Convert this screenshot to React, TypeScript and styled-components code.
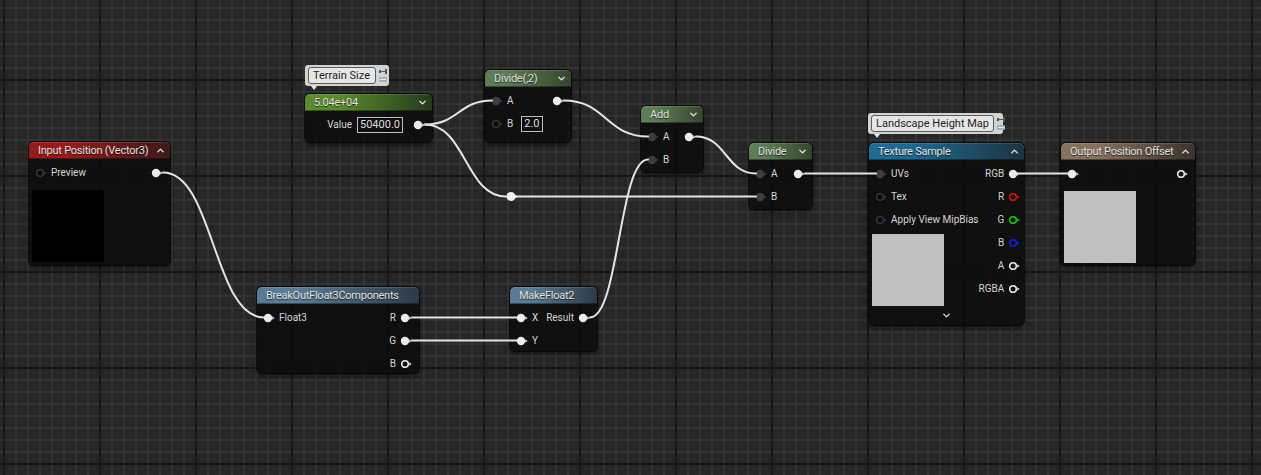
import React from "react";
import styled, { createGlobalStyle } from "styled-components";
import { ChevronDown, ChevronUp } from "lucide-react";

const GlobalStyle = createGlobalStyle`
  html, body { margin: 0; padding: 0; background: #262626; }
  body { font-family: Roboto, "Noto Sans", sans-serif; }
`;

type PinKind = "white" | "hollow" | "dim" | "ring";

interface Row {
  label?: string;
  pin: PinKind;
  color?: string;
  value?: string;
}

interface NodeDef {
  id: string;
  title: string;
  x: number;
  y: number;
  w: number;
  h: number;
  from: string;
  to: string;
  collapse?: "up" | "down";
  inputs: Row[];
  outputs: Row[];
  preview?: string;
  previewGap?: number;
  footer?: boolean;
}

const HEADER = 17;
const ROW = 23;

const NODES: NodeDef[] = [
  {
    id: "inputPos", title: "Input Position (Vector3)", x: 29, y: 142, w: 141, h: 123,
    from: "#981b1b", to: "#3b1a1a", collapse: "up",
    inputs: [{ pin: "ring", label: "Preview" }], outputs: [{ pin: "white" }],
    preview: "#000", previewGap: 6,
  },
  {
    id: "const", title: "5.04e+04", x: 305, y: 94, w: 127, h: 48,
    from: "#5a8c2e", to: "#263a1c", collapse: "down",
    inputs: [], outputs: [{ pin: "white", label: "Value", value: "50400.0" }],
  },
  {
    id: "divide2", title: "Divide(,2)", x: 485, y: 70, w: 86, h: 72,
    from: "#5e7c55", to: "#34452f", collapse: "down",
    inputs: [{ pin: "dim", label: "A" }, { pin: "ring", label: "B", value: "2.0" }],
    outputs: [{ pin: "white" }],
  },
  {
    id: "add", title: "Add", x: 641, y: 106, w: 62, h: 66,
    from: "#5e7c55", to: "#34452f", collapse: "down",
    inputs: [{ pin: "dim", label: "A" }, { pin: "dim", label: "B" }],
    outputs: [{ pin: "white" }],
  },
  {
    id: "divide", title: "Divide", x: 749, y: 143, w: 63, h: 66,
    from: "#5e7c55", to: "#34452f", collapse: "down",
    inputs: [{ pin: "dim", label: "A" }, { pin: "dim", label: "B" }],
    outputs: [{ pin: "white" }],
  },
  {
    id: "texture", title: "Texture Sample", x: 869, y: 143, w: 155, h: 182,
    from: "#1e6a92", to: "#1d3442", collapse: "up",
    inputs: [
      { pin: "dim", label: "UVs" },
      { pin: "ring", label: "Tex" },
      { pin: "ring", label: "Apply View MipBias" },
    ],
    outputs: [
      { pin: "white", label: "RGB" },
      { pin: "hollow", label: "R", color: "#e01010" },
      { pin: "hollow", label: "G", color: "#10d010" },
      { pin: "hollow", label: "B", color: "#1020e8" },
      { pin: "hollow", label: "A" },
      { pin: "hollow", label: "RGBA" },
    ],
    preview: "#c0c0c0", previewGap: 3, footer: true,
  },
  {
    id: "output", title: "Output Position Offset", x: 1061, y: 143, w: 134, h: 122,
    from: "#87725d", to: "#3a332d", collapse: "up",
    inputs: [{ pin: "white" }], outputs: [{ pin: "hollow" }],
    preview: "#c0c0c0", previewGap: 6,
  },
  {
    id: "breakout", title: "BreakOutFloat3Components", x: 257, y: 287, w: 162, h: 86,
    from: "#5a7b93", to: "#2c3a46",
    inputs: [{ pin: "white", label: "Float3" }],
    outputs: [
      { pin: "white", label: "R" },
      { pin: "white", label: "G" },
      { pin: "hollow", label: "B" },
    ],
  },
  {
    id: "make", title: "MakeFloat2", x: 510, y: 287, w: 87, h: 64,
    from: "#5a7b93", to: "#2c3a46",
    inputs: [{ pin: "white", label: "X" }, { pin: "white", label: "Y" }],
    outputs: [{ pin: "white", label: "Result" }],
  },
];

const byId = (id: string) => NODES.find((n) => n.id === id)!;
const rowY = (n: NodeDef, i: number) => n.y + HEADER + 2 + ROW * i + ROW / 2;
const outPt = (id: string, i: number): [number, number] => {
  const n = byId(id);
  return [n.x + n.w - 14 + 7, rowY(n, i)];
};
const inPt = (id: string, i: number): [number, number] => {
  const n = byId(id);
  return [n.x + 11 - 4, rowY(n, i)];
};

const curve = ([x1, y1]: [number, number], [x2, y2]: [number, number]) => {
  const d = Math.max(Math.abs(x2 - x1) * 0.5, 25);
  return `M${x1} ${y1} C${x1 + d} ${y1} ${x2 - d} ${y2} ${x2} ${y2}`;
};

const KNOT: [number, number] = [511, 196.5];

const WIRES: [string, number, string, number][] = [
  ["inputPos", 0, "breakout", 0],
  ["const", 0, "divide2", 0],
  ["divide2", 0, "add", 0],
  ["add", 0, "divide", 0],
  ["make", 0, "add", 1],
  ["divide", 0, "texture", 0],
  ["texture", 0, "output", 0],
  ["breakout", 0, "make", 0],
  ["breakout", 1, "make", 1],
];

const Canvas = styled.div`
  position: relative;
  width: 1261px;
  height: 475px;
  overflow: hidden;
  background-color: #262626;
  background-image:
    linear-gradient(to right, #171717 2px, transparent 2px),
    linear-gradient(to bottom, #171717 2px, transparent 2px),
    linear-gradient(to right, #333333 2px, transparent 2px),
    linear-gradient(to bottom, #333333 2px, transparent 2px);
  background-size: 96px 96px, 96px 96px, 12px 12px, 12px 12px;
  background-position: 3px 0, 0 79px, 3px 0, 0 7px;
`;

const NodeBox = styled.div<{ $x: number; $y: number; $w: number; $h: number }>`
  position: absolute;
  left: ${(p) => p.$x}px;
  top: ${(p) => p.$y}px;
  width: ${(p) => p.$w}px;
  height: ${(p) => p.$h}px;
  display: flex;
  flex-direction: column;
  background: rgba(12, 13, 12, 0.88);
  border-radius: 5px;
  box-shadow: 0 0 0 1px rgba(0, 0, 0, 0.7), 0 3px 5px rgba(0, 0, 0, 0.5);
  color: #d8d8d8;
`;

const Header = styled.div<{ $from: string; $to: string }>`
  height: ${HEADER}px;
  flex: none;
  display: flex;
  align-items: center;
  justify-content: space-between;
  padding: 0 4px 0 9px;
  border-radius: 5px 5px 0 0;
  background: linear-gradient(90deg, ${(p) => p.$from} 0%, ${(p) => p.$from} 25%, ${(p) => p.$to} 100%);
  box-shadow: inset 0 1px 0 rgba(255, 255, 255, 0.12), inset 0 -1px 0 rgba(0, 0, 0, 0.4);
  font-size: 11px;
  letter-spacing: -0.25px;
  color: #e2e2e2;
  text-shadow: 0 1px 1px rgba(0, 0, 0, 0.7);
  white-space: nowrap;
`;

const Body = styled.div`
  display: flex;
  justify-content: space-between;
  padding-top: 2px;
`;

const Column = styled.div<{ $side: "in" | "out" }>`
  display: flex;
  flex-direction: column;
  align-items: ${(p) => (p.$side === "in" ? "flex-start" : "flex-end")};
`;

const PinRow = styled.div<{ $side: "in" | "out" }>`
  height: ${ROW}px;
  display: flex;
  align-items: center;
  gap: 4px;
  padding: ${(p) => (p.$side === "in" ? "0 0 0 6px" : "0 7px 0 0")};
  font-size: 10px;
  color: #d4d4d4;
  white-space: nowrap;
`;

const ValueBox = styled.span<{ $side: "in" | "out" }>`
  display: inline-block;
  height: 14px;
  line-height: 14px;
  padding: 0 2px;
  margin: ${(p) => (p.$side === "out" ? "0 6px 0 1px" : "0 0 0 4px")};
  border: 1px solid #bdbdbd;
  font-size: 11px;
  color: #dedede;
`;

const Preview = styled.div<{ $color: string; $gap: number }>`
  width: 72px;
  height: 72px;
  margin: ${(p) => p.$gap}px 0 0 3px;
  background: ${(p) => p.$color};
`;

const Footer = styled.div`
  flex: 1;
  display: flex;
  align-items: center;
  justify-content: center;
  color: #e0e0e0;
`;

const Bubble = styled.div<{ $x: number; $y: number; $w: number }>`
  position: absolute;
  z-index: 3;
  left: ${(p) => p.$x}px;
  top: ${(p) => p.$y}px;
  width: ${(p) => p.$w}px;
  height: 21px;
  box-sizing: border-box;
  display: flex;
  align-items: center;
  gap: 3px;
  padding: 0 2px 0 3px;
  background: #d2d2d2;
  border-radius: 3px;
  &::after {
    content: "";
    position: absolute;
    left: 6px;
    bottom: -4px;
    border-left: 3px solid transparent;
    border-right: 3px solid transparent;
    border-top: 4px solid #e8e8e8;
  }
`;

const BubbleText = styled.div`
  flex: 1;
  height: 15px;
  line-height: 15px;
  padding: 0 4px;
  border: 1px solid #5c5c5c;
  border-radius: 3px;
  background: #e6e6e6;
  font-size: 11px;
  color: #1e1e1e;
  white-space: nowrap;
`;

const BubbleIcons = styled.div`
  display: flex;
  flex-direction: column;
  gap: 3px;
`;

const WireLayer = styled.svg`
  position: absolute;
  left: 0;
  top: 0;
  z-index: 2;
  pointer-events: none;
`;

const Pin = ({ kind, color }: { kind: PinKind; color?: string }) => {
  const c = color ?? "#ececec";
  let body: React.ReactNode;
  let nub = c;
  if (kind === "white") body = <circle cx="5" cy="5" r="4.2" fill={c} />;
  else if (kind === "hollow") body = <circle cx="5" cy="5" r="3.3" fill="#111" stroke={c} strokeWidth="1.6" />;
  else if (kind === "dim") {
    body = <circle cx="5" cy="5" r="4.2" fill="#3d3d3d" />;
    nub = "#3d3d3d";
  } else {
    body = <circle cx="5" cy="5" r="3.4" fill="#0c0c0c" stroke="#3a3a3a" strokeWidth="1.4" />;
    nub = "#3a3a3a";
  }
  return (
    <svg width="12" height="10" viewBox="0 0 12 10">
      {body}
      <path d="M9.3 3.2 L11.6 5 L9.3 6.8 Z" fill={nub} />
    </svg>
  );
};

const CommentIcons = () => (
  <BubbleIcons>
    <svg width="8" height="5" viewBox="0 0 8 5">
      <rect x="0" y="1" width="2" height="3" fill="#555" />
      <rect x="2" y="2" width="4" height="1" fill="#555" />
      <rect x="6" y="0" width="2" height="5" fill="#555" />
    </svg>
    <svg width="8" height="5" viewBox="0 0 8 5">
      <rect x="0" y="0" width="8" height="5" rx="1" fill="#9fb0bf" />
      <rect x="1" y="2" width="6" height="1" fill="#e8eef2" />
    </svg>
  </BubbleIcons>
);

const GraphNode = ({ n }: { n: NodeDef }) => (
  <NodeBox $x={n.x} $y={n.y} $w={n.w} $h={n.h}>
    <Header $from={n.from} $to={n.to}>
      <span>{n.title}</span>
      {n.collapse === "up" && <ChevronUp size={11} strokeWidth={3} color="#e6e6e6" />}
      {n.collapse === "down" && <ChevronDown size={11} strokeWidth={3} color="#e6e6e6" />}
    </Header>
    <Body>
      <Column $side="in">
        {n.inputs.map((r, i) => (
          <PinRow key={i} $side="in">
            <Pin kind={r.pin} color={r.color} />
            {r.label && <span>{r.label}</span>}
            {r.value && <ValueBox $side="in">{r.value}</ValueBox>}
          </PinRow>
        ))}
        {n.preview && <Preview $color={n.preview} $gap={n.previewGap ?? 4} />}
      </Column>
      <Column $side="out">
        {n.outputs.map((r, i) => (
          <PinRow key={i} $side="out">
            {r.label && <span>{r.label}</span>}
            {r.value && <ValueBox $side="out">{r.value}</ValueBox>}
            <Pin kind={r.pin} color={r.color} />
          </PinRow>
        ))}
      </Column>
    </Body>
    {n.footer && (
      <Footer>
        <ChevronDown size={11} strokeWidth={3} />
      </Footer>
    )}
  </NodeBox>
);

export default function App() {
  const constOut = outPt("const", 0);
  const divB = inPt("divide", 1);
  return (
    <>
      <GlobalStyle />
      <Canvas>
        {NODES.map((n) => (
          <GraphNode key={n.id} n={n} />
        ))}
        <WireLayer width={1261} height={475} viewBox="0 0 1261 475">
          <g fill="none" stroke="#e4e4e4" strokeWidth="2" strokeLinecap="round">
            {WIRES.map(([a, ai, b, bi], i) => (
              <path key={i} d={curve(outPt(a, ai), inPt(b, bi))} />
            ))}
            <path d={curve(constOut, [KNOT[0] - 5, KNOT[1]])} />
            <path d={`M${KNOT[0]} ${KNOT[1]} L${divB[0]} ${divB[1]}`} />
          </g>
          <circle cx={KNOT[0]} cy={KNOT[1]} r="4.5" fill="#f0f0f0" />
          <path d={`M${KNOT[0] + 4} ${KNOT[1] - 2} L${KNOT[0] + 7} ${KNOT[1]} L${KNOT[0] + 4} ${KNOT[1] + 2} Z`} fill="#f0f0f0" />
        </WireLayer>
        <Bubble $x={305} $y={65} $w={84}>
          <BubbleText>Terrain Size</BubbleText>
          <CommentIcons />
        </Bubble>
        <Bubble $x={868} $y={113} $w={135}>
          <BubbleText>Landscape Height Map</BubbleText>
          <CommentIcons />
        </Bubble>
      </Canvas>
    </>
  );
}
